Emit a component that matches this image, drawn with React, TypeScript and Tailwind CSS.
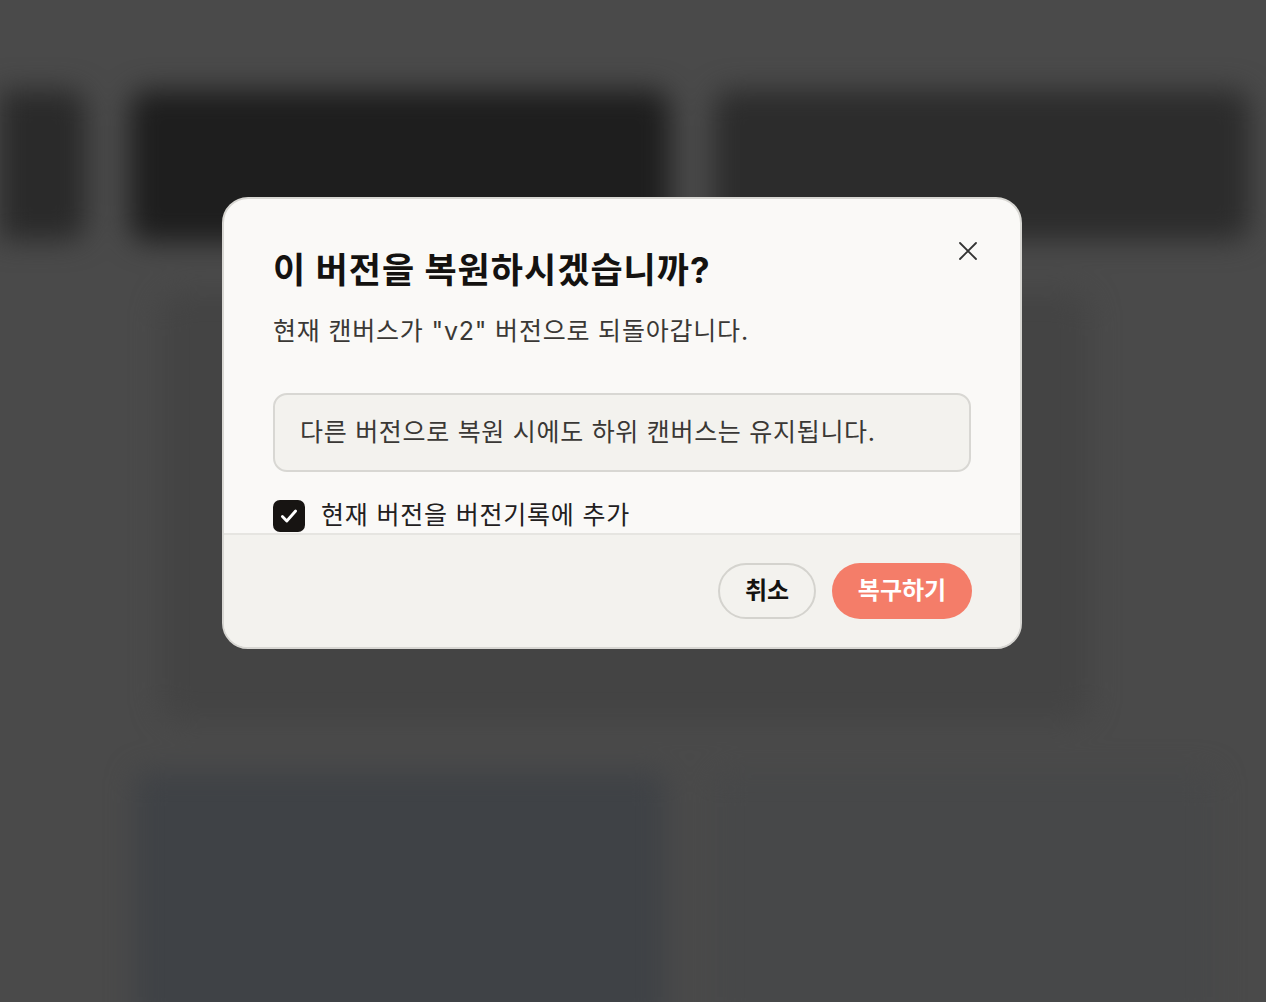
import React, { useState } from 'react';

const font = { fontFamily: 'Inter, "Noto Sans CJK KR", "Noto Sans", sans-serif' };

const Backdrop: React.FC = () => {
    return (
        <div className="absolute inset-0 overflow-hidden bg-[#4a4a4a]">
            <div className="h-full w-full blur-[14px]">
                <div className="h-[90px]" />
                <div className="flex gap-[44px] pl-0">
                    <div className="h-[150px] w-[86px] rounded-r-[18px] bg-[#2a2a2a]" />
                    <div className="h-[152px] w-[540px] rounded-[18px] bg-[#1e1e1e]" />
                    <div className="h-[150px] w-[536px] rounded-[18px] bg-[#2c2c2c]" />
                </div>
                <div className="ml-[160px] mt-[50px] h-[430px] w-[930px] rounded-[24px] bg-[#444444]" />
                <div className="ml-[135px] mt-[50px] flex gap-[50px]">
                    <div className="h-[260px] w-[530px] rounded-[12px] bg-[#3f4246]" />
                    <div className="h-[260px] w-[500px] rounded-[12px] bg-[#474849]" />
                </div>
            </div>
        </div>
    );
};

const RestoreDialog: React.FC = () => {
    const [keepHistory, setKeepHistory] = useState(true);

    return (
        <div className="absolute left-[222px] top-[197px] flex h-[452px] w-[800px] flex-col overflow-hidden rounded-[26px] border-2 border-[#d8d7d3] bg-[#faf9f7]">
            <div className="relative h-[334px] shrink-0 overflow-hidden px-[49px] pt-[47px]">
                <button type="button" className="absolute right-[42px] top-[42px] text-[#333]">
                    <svg width="20" height="20" viewBox="0 0 20 20" fill="none" stroke="currentColor" strokeWidth="1.8" strokeLinecap="round">
                        <path d="M2 2L18 18M18 2L2 18" />
                    </svg>
                </button>
                <h2 className="text-[35px] font-bold leading-[48px] tracking-[1px] text-[#141210]">이 버전을 복원하시겠습니까?</h2>
                <p className="mt-[19px] text-[25px] leading-[36px] tracking-[0.8px] text-[#3a3835]">현재 캔버스가 "v2" 버전으로 되돌아갑니다.</p>
                <div className="mt-[44px] flex h-[79px] items-center rounded-[14px] border-2 border-[#d8d7d3] bg-[#f3f2ee] px-[25px]">
                    <span className="text-[25px] tracking-[0.7px] text-[#3a3835]">다른 버전으로 복원 시에도 하위 캔버스는 유지됩니다.</span>
                </div>
                <label className="mt-[25px] flex items-center gap-4">
                    <button
                        type="button"
                        onClick={() => setKeepHistory(!keepHistory)}
                        className="flex h-[32px] w-[32px] items-center justify-center rounded-[7px] bg-[#171412]"
                    >
                        {keepHistory && (
                            <svg width="22" height="22" viewBox="0 0 20 20" fill="none" stroke="white" strokeWidth="2.6" strokeLinecap="round" strokeLinejoin="round">
                                <path d="M4 10.5L8 14.5L16 5.5" />
                            </svg>
                        )}
                    </button>
                    <span className="text-[25px] tracking-[0.8px] text-[#22201e]">현재 버전을 버전기록에 추가</span>
                </label>
            </div>
            <div className="flex flex-1 items-center justify-end gap-4 border-t-2 border-[#e6e5e1] bg-[#f3f2ee] px-[48px]">
                <button type="button" className="h-[56px] w-[98px] rounded-full border-2 border-[#d4d3ce] text-[24px] font-bold text-[#141210]">취소</button>
                <button type="button" className="h-[56px] w-[140px] rounded-full bg-[#f47d69] text-[24px] font-semibold text-white">복구하기</button>
            </div>
        </div>
    );
};

export default function App() {
    return (
        <div className="relative h-[1002px] w-full overflow-hidden" style={font}>
            <Backdrop />
            <RestoreDialog />
        </div>
    );
}
